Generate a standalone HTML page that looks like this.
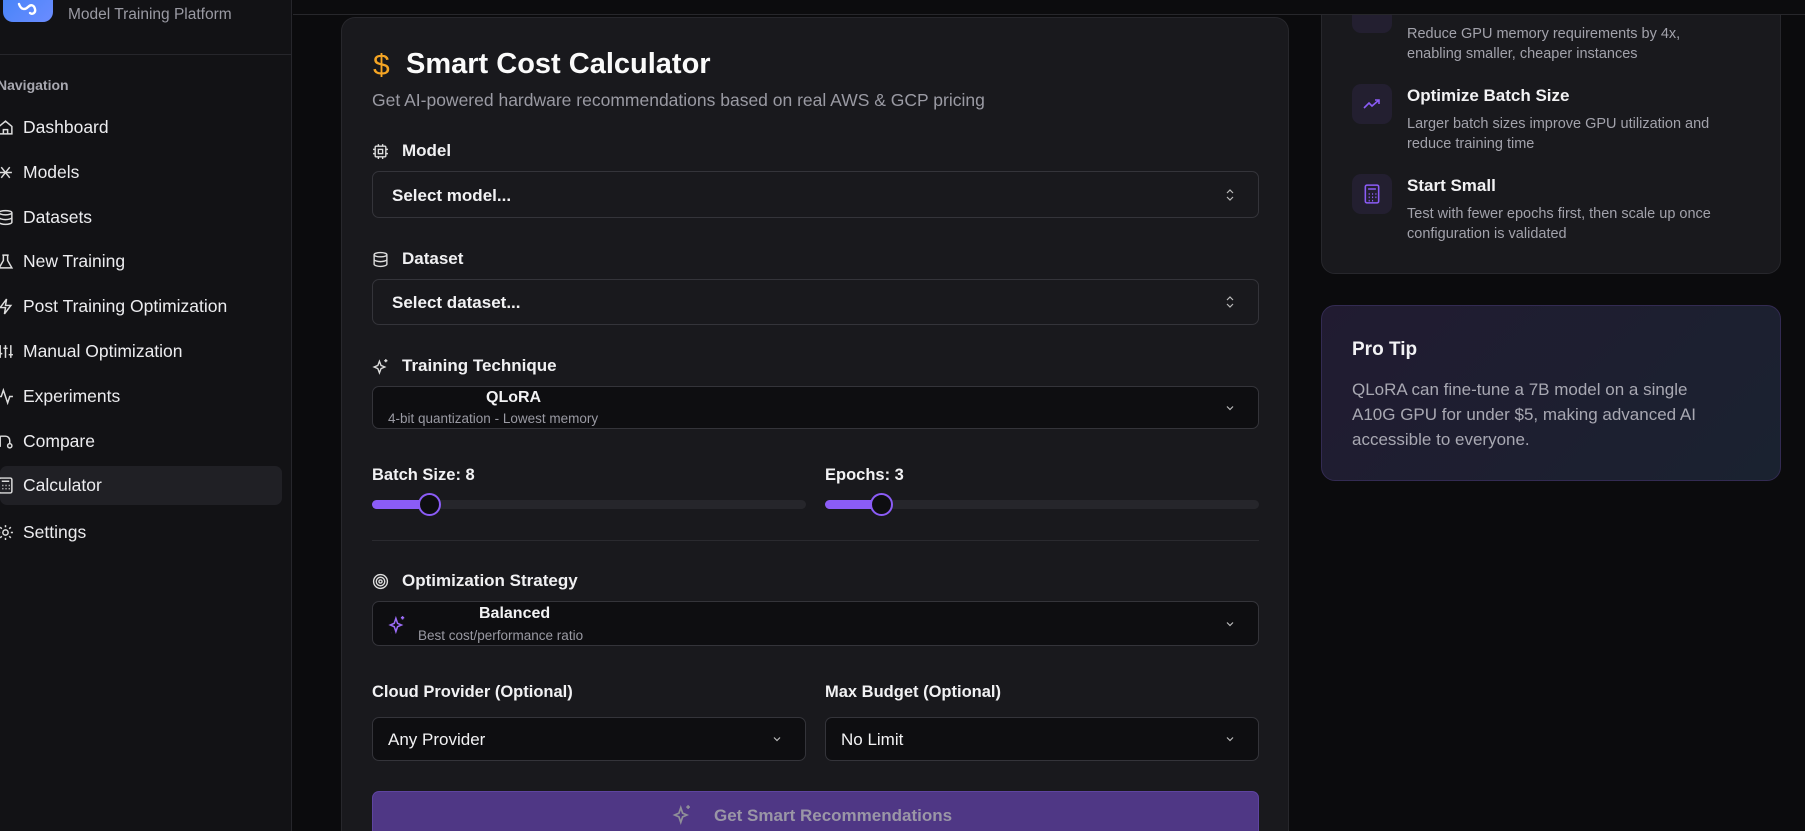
<!DOCTYPE html>
<html style="overflow:hidden;width:1805px;height:831px"><head><meta charset="utf-8"><style>
*{box-sizing:border-box;margin:0;padding:0}
body{width:1805px;height:831px;overflow:hidden;background:#0b0b0d;font-family:"Liberation Sans",sans-serif;color:#f2f2f4;position:relative}
.abs{position:absolute}
#side{left:0;top:0;width:292px;height:831px;background:#121215;border-right:1px solid #26262b}
.nav{position:absolute;left:0;width:282px;height:40px;display:flex;align-items:center;font-size:17.5px;color:#ececef}
.nav svg{position:absolute;left:-3px;width:17px;height:17px}
.nav span{position:absolute;left:23px}
.card{background:#19191d;border:1px solid #27272c;border-radius:14px}
.lbl{position:absolute;font-size:17px;font-weight:bold;color:#f0f0f2;display:flex;align-items:center}
.lbl svg{width:17px;height:17px;margin-right:13px}
.sel{position:absolute;border:1px solid #34343a;border-radius:7px;background:#19191d}
.sel.dk{background:#0e0e11}
.chev{position:absolute;right:22px;top:50%;margin-top:-6px;width:12px;height:12px}
.desc{font-size:14.5px;color:#a2a2ab;line-height:20px}
</style></head><body>
<div id="side" class="abs">
  <div class="abs" style="left:3px;top:-28px;width:50px;height:50px;border-radius:10px;background:linear-gradient(135deg,#3b82f6,#6b8cff)"></div>
  <svg class="abs" style="left:16px;top:2px" width="24" height="16" viewBox="0 0 24 16"><path d="M3 2c2 6 6 6 9 3s6-2 7 2-3 6-5 4" stroke="#fff" stroke-width="2.4" fill="none" stroke-linecap="round"/></svg>
  <div class="abs" style="left:68px;top:6px;font-size:15.5px;color:#9a9aa3">Model Training Platform</div>
  <div class="abs" style="left:0;top:54px;width:292px;height:1px;background:#26262b"></div>
  <div class="abs" style="left:-3px;top:77px;font-size:14px;color:#a8a8b0;font-weight:bold">Navigation</div>
  <div class="nav" style="top:107px"><svg viewBox="0 0 16 16" fill="none" stroke="#ddd" stroke-width="1.4"><path d="M2 7l6-5 6 5v7H2z M6 14v-4h4v4"/></svg><span>Dashboard</span></div>
  <div class="nav" style="top:152px"><svg viewBox="0 0 16 16" fill="none" stroke="#ddd" stroke-width="1.4"><path d="M4 3l8 10M12 3L4 13M2 8h12"/></svg><span>Models</span></div>
  <div class="nav" style="top:197px"><svg viewBox="0 0 16 16" fill="none" stroke="#ddd" stroke-width="1.4"><ellipse cx="8" cy="3.5" rx="6" ry="2"/><path d="M2 3.5v9c0 1 3 2 6 2s6-1 6-2v-9M2 8c0 1 3 2 6 2s6-1 6-2"/></svg><span>Datasets</span></div>
  <div class="nav" style="top:241px"><svg viewBox="0 0 16 16" fill="none" stroke="#ddd" stroke-width="1.4"><path d="M6 2v5L2 14h12L10 7V2M5 2h6"/></svg><span>New Training</span></div>
  <div class="nav" style="top:286px"><svg viewBox="0 0 16 16" fill="none" stroke="#ddd" stroke-width="1.4"><path d="M9 1L3 9h5l-1 6 6-8H8z"/></svg><span>Post Training Optimization</span></div>
  <div class="nav" style="top:331px"><svg viewBox="0 0 16 16" fill="none" stroke="#ddd" stroke-width="1.4"><path d="M3 2v12M8 2v12M13 2v12M1 10h4M6 5h4M11 11h4"/></svg><span>Manual Optimization</span></div>
  <div class="nav" style="top:376px"><svg viewBox="0 0 16 16" fill="none" stroke="#ddd" stroke-width="1.4"><path d="M1 8h3l2-6 4 12 2-6h3"/></svg><span>Experiments</span></div>
  <div class="nav" style="top:421px"><svg viewBox="0 0 16 16" fill="none" stroke="#ddd" stroke-width="1.4"><circle cx="12" cy="12" r="2"/><path d="M3 3h5a4 4 0 014 4v3M3 3v10"/></svg><span>Compare</span></div>
  <div class="nav" style="top:466px;background:#202025;border-radius:7px;height:39px"><svg viewBox="0 0 16 16" fill="none" stroke="#ddd" stroke-width="1.4"><rect x="2" y="1" width="12" height="14" rx="1.5"/><path d="M4.5 4h7M5 8h1M8 8h1M11 8h1M5 11h1M8 11h1M11 11h1"/></svg><span>Calculator</span></div>
  <div class="nav" style="top:512px"><svg viewBox="0 0 16 16" fill="none" stroke="#ddd" stroke-width="1.4"><circle cx="8" cy="8" r="2.5"/><path d="M8 1v2M8 13v2M1 8h2M13 8h2M3 3l1.5 1.5M11.5 11.5L13 13M3 13l1.5-1.5M11.5 4.5L13 3"/></svg><span>Settings</span></div>
</div>
<div class="abs" style="left:293px;top:0;width:1512px;height:15px;background:#0c0c0e;border-bottom:1px solid #27272b"></div>

<div class="abs card" style="left:341px;top:17px;width:948px;height:830px;border-bottom:none"></div>
<div class="abs" style="left:373px;top:49px;font-size:30px;color:#f5a524">$</div>
<div class="abs" style="left:406px;top:48px;font-size:29px;font-weight:bold;color:#fafafa">Smart Cost Calculator</div>
<div class="abs" style="left:372px;top:90px;font-size:17.5px;color:#9a9aa3">Get AI-powered hardware recommendations based on real AWS &amp; GCP pricing</div>

<div class="lbl" style="left:372px;top:141px"><svg viewBox="0 0 16 16" fill="none" stroke="#ddd" stroke-width="1.3"><rect x="3" y="3" width="10" height="10" rx="1"/><rect x="6" y="6" width="4" height="4"/><path d="M6 1v2M10 1v2M6 13v2M10 13v2M1 6h2M1 10h2M13 6h2M13 10h2"/></svg>Model</div>
<div class="sel" style="left:372px;top:171px;width:887px;height:47px"><div class="abs" style="left:19px;top:14px;font-size:17px;font-weight:bold">Select model...</div><svg class="chev" viewBox="0 0 12 12" fill="none" stroke="#bbb" stroke-width="1.2"><path d="M3 4l3-3 3 3M3 8l3 3 3-3"/></svg></div>

<div class="lbl" style="left:372px;top:249px"><svg viewBox="0 0 16 16" fill="none" stroke="#ddd" stroke-width="1.3"><ellipse cx="8" cy="3.5" rx="6" ry="2"/><path d="M2 3.5v9c0 1 3 2 6 2s6-1 6-2v-9M2 8c0 1 3 2 6 2s6-1 6-2"/></svg>Dataset</div>
<div class="sel" style="left:372px;top:279px;width:887px;height:46px"><div class="abs" style="left:19px;top:13px;font-size:17px;font-weight:bold">Select dataset...</div><svg class="chev" viewBox="0 0 12 12" fill="none" stroke="#bbb" stroke-width="1.2"><path d="M3 4l3-3 3 3M3 8l3 3 3-3"/></svg></div>

<div class="lbl" style="left:372px;top:356px"><svg viewBox="0 0 16 16" fill="none" stroke="#ddd" stroke-width="1.3"><path d="M7 3l1.5 4L12 8.5 8.5 10 7 14 5.5 10 2 8.5 5.5 7z M13 1v3M11.5 2.5h3"/></svg>Training Technique</div>
<div class="sel dk" style="left:372px;top:386px;width:887px;height:43px"><div class="abs" style="left:113px;top:2px;font-size:16px;font-weight:bold">QLoRA</div><div class="abs" style="left:15px;top:24px;font-size:13.5px;color:#9a9aa3">4-bit quantization - Lowest memory</div><svg class="chev" viewBox="0 0 12 12" fill="none" stroke="#bbb" stroke-width="1.2"><path d="M3 4.5l3 3 3-3"/></svg></div>

<div class="abs" style="left:372px;top:466px;font-size:16.5px;font-weight:bold">Batch Size: 8</div>
<div class="abs" style="left:372px;top:500px;width:434px;height:9px;border-radius:5px;background:#26262b"><div style="width:57px;height:9px;border-radius:5px;background:#8b5cf6"></div></div>
<div class="abs" style="left:418px;top:493px;width:23px;height:23px;border-radius:50%;background:#0e0e11;border:2px solid #8b5cf6"></div>
<div class="abs" style="left:825px;top:466px;font-size:16.5px;font-weight:bold">Epochs: 3</div>
<div class="abs" style="left:825px;top:500px;width:434px;height:9px;border-radius:5px;background:#26262b"><div style="width:56px;height:9px;border-radius:5px;background:#8b5cf6"></div></div>
<div class="abs" style="left:870px;top:493px;width:23px;height:23px;border-radius:50%;background:#0e0e11;border:2px solid #8b5cf6"></div>
<div class="abs" style="left:372px;top:540px;width:887px;height:1px;background:#2a2a2f"></div>

<div class="lbl" style="left:372px;top:571px"><svg viewBox="0 0 16 16" fill="none" stroke="#ddd" stroke-width="1.3"><circle cx="8" cy="8" r="6.5"/><circle cx="8" cy="8" r="4"/><circle cx="8" cy="8" r="1.5"/></svg>Optimization Strategy</div>
<div class="sel dk" style="left:372px;top:601px;width:887px;height:45px"><svg class="abs" style="left:15px;top:13px" width="18" height="20" viewBox="0 0 16 18" fill="none" stroke="#9b6cf7" stroke-width="1.4"><path d="M7 3l1.5 4.5L12 9l-3.5 1.5L7 15l-1.5-4.5L2 9l3.5-1.5z M13 1v3M11.5 2.5h3M3 16h.1"/></svg><div class="abs" style="left:106px;top:3px;font-size:16px;font-weight:bold">Balanced</div><div class="abs" style="left:45px;top:26px;font-size:13.5px;color:#9a9aa3">Best cost/performance ratio</div><svg class="chev" viewBox="0 0 12 12" fill="none" stroke="#bbb" stroke-width="1.2"><path d="M3 4.5l3 3 3-3"/></svg></div>

<div class="abs" style="left:372px;top:683px;font-size:16.5px;font-weight:bold">Cloud Provider (Optional)</div>
<div class="abs" style="left:825px;top:683px;font-size:16.5px;font-weight:bold">Max Budget (Optional)</div>
<div class="sel dk" style="left:372px;top:717px;width:434px;height:44px"><div class="abs" style="left:15px;top:12px;font-size:17px">Any Provider</div><svg class="chev" viewBox="0 0 12 12" fill="none" stroke="#bbb" stroke-width="1.2"><path d="M3 4.5l3 3 3-3"/></svg></div>
<div class="sel dk" style="left:825px;top:717px;width:434px;height:44px"><div class="abs" style="left:15px;top:12px;font-size:17px">No Limit</div><svg class="chev" viewBox="0 0 12 12" fill="none" stroke="#bbb" stroke-width="1.2"><path d="M3 4.5l3 3 3-3"/></svg></div>

<div class="abs" style="left:372px;top:791px;width:887px;height:40px;border-radius:7px 7px 0 0;background:#4f3785;border:1px solid #5e44a0;border-bottom:none"></div>
<svg class="abs" style="left:672px;top:804px" width="20" height="22" viewBox="0 0 16 18" fill="none" stroke="#8f8f98" stroke-width="1.4"><path d="M7 3l1.5 4.5L12 9l-3.5 1.5L7 15l-1.5-4.5L2 9l3.5-1.5z M13 1v3M11.5 2.5h3"/></svg>
<div class="abs" style="left:714px;top:806px;font-size:17px;font-weight:bold;color:#9a96a6">Get Smart Recommendations</div>

<div class="abs card" style="left:1321px;top:-40px;width:460px;height:314px;border-radius:14px"></div>
<div class="abs" style="left:1352px;top:-7px;width:40px;height:40px;border-radius:9px;background:#231f30"></div>
<svg class="abs" style="left:1362px;top:0" width="20" height="16" viewBox="0 0 20 16" fill="none" stroke="#8b5cf6" stroke-width="1.6"><circle cx="10" cy="3" r="7"/><circle cx="10" cy="3" r="3.5"/></svg>
<div class="abs" style="left:1352px;top:-7px;width:40px;height:22px;background:#0c0c0e"></div>
<div class="abs" style="left:1293px;top:0;width:512px;height:15px;background:#0c0c0e;border-bottom:1px solid #27272b"></div>
<div class="abs desc" style="left:1407px;top:24px">Reduce GPU memory requirements by 4x,<br>enabling smaller, cheaper instances</div>
<div class="abs" style="left:1352px;top:84px;width:40px;height:40px;border-radius:9px;background:#231f30"></div>
<svg class="abs" style="left:1362px;top:94px" width="20" height="20" viewBox="0 0 20 20" fill="none" stroke="#8b5cf6" stroke-width="1.6"><path d="M2 14l5-5 3 3 7-6M13 6h4v4"/></svg>
<div class="abs" style="left:1407px;top:86px;font-size:17px;font-weight:bold">Optimize Batch Size</div>
<div class="abs desc" style="left:1407px;top:114px">Larger batch sizes improve GPU utilization and<br>reduce training time</div>
<div class="abs" style="left:1352px;top:174px;width:40px;height:40px;border-radius:9px;background:#231f30"></div>
<svg class="abs" style="left:1363px;top:184px" width="18" height="20" viewBox="0 0 16 18" fill="none" stroke="#8b5cf6" stroke-width="1.4"><rect x="2" y="1" width="12" height="16" rx="1.5"/><path d="M4.5 4.5h7M5 9h1M8 9h1M11 9h1M5 12h1M8 12h1M11 12h1M5 15h1M8 15h1"/></svg>
<div class="abs" style="left:1407px;top:176px;font-size:17px;font-weight:bold">Start Small</div>
<div class="abs desc" style="left:1407px;top:204px">Test with fewer epochs first, then scale up once<br>configuration is validated</div>

<div class="abs" style="left:1321px;top:305px;width:460px;height:176px;border-radius:14px;border:1px solid #332b52;background:linear-gradient(135deg,#211b31,#1a2230)"></div>
<div class="abs" style="left:1352px;top:339px;font-size:19px;font-weight:bold">Pro Tip</div>
<div class="abs" style="left:1352px;top:377px;font-size:17px;line-height:25px;color:#a8a8b2">QLoRA can fine-tune a 7B model on a single<br>A10G GPU for under $5, making advanced AI<br>accessible to everyone.</div>
</body></html>
